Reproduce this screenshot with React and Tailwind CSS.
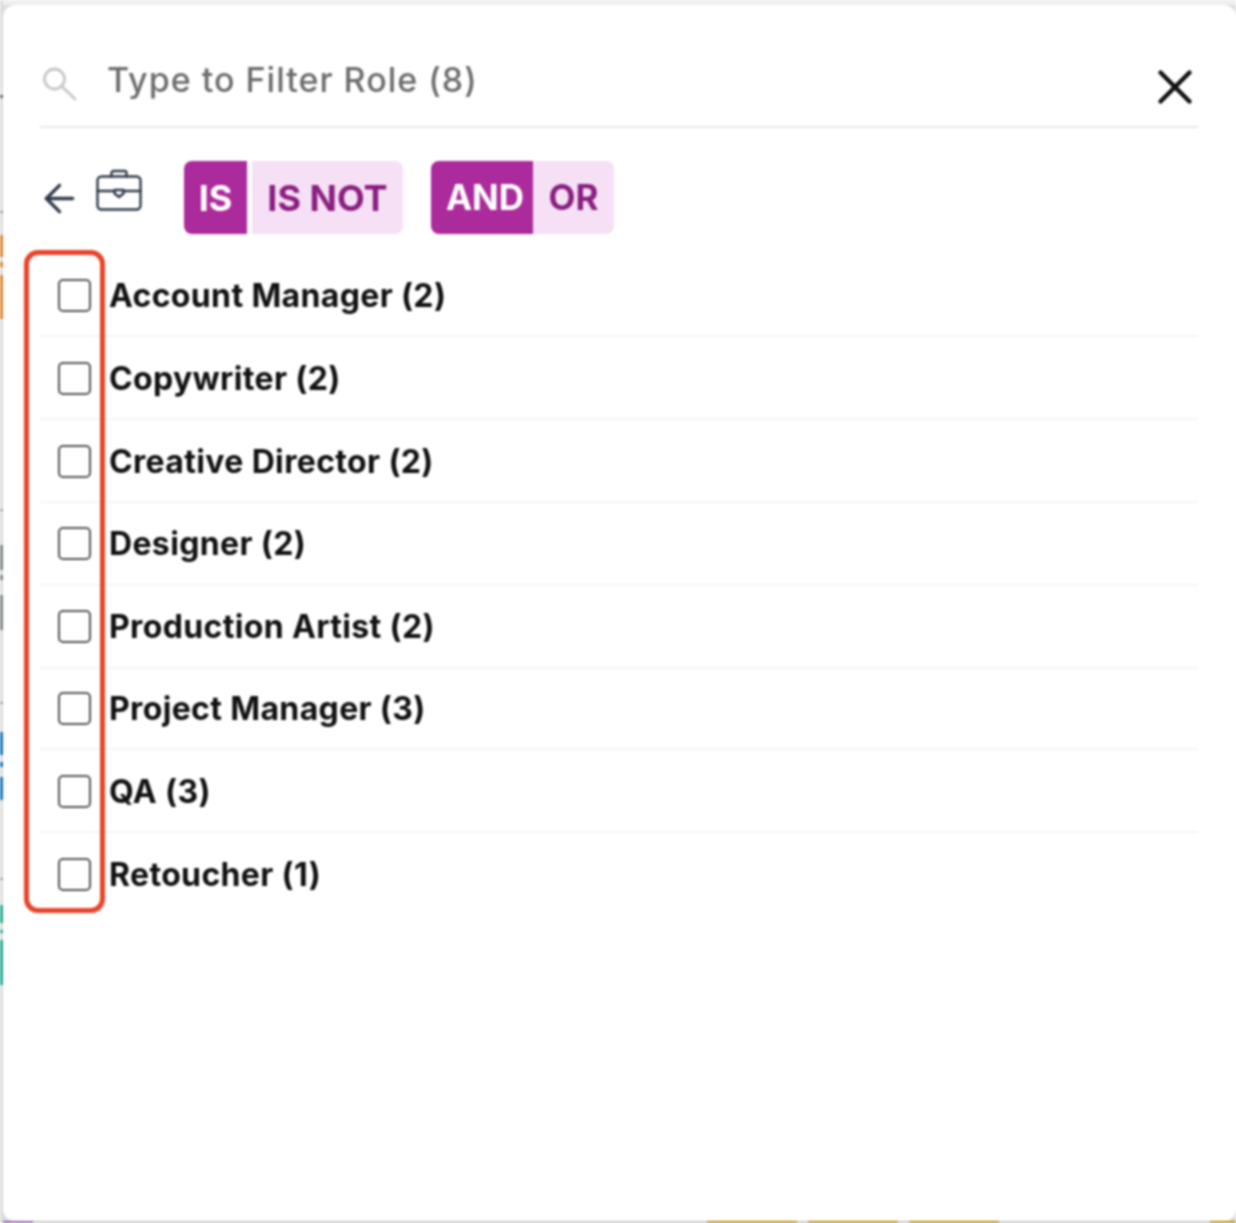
import { ArrowLeft, X } from "lucide-react";

const roles = [
  { label: "Account Manager (2)", h: "h-[83px] pt-[2px]" },
  { label: "Copywriter (2)", h: "h-[83px] pt-[2px]" },
  { label: "Creative Director (2)", h: "h-[83px] pt-[2px]" },
  { label: "Designer (2)", h: "h-[83px]" },
  { label: "Production Artist (2)", h: "h-[83px]" },
  { label: "Project Manager (3)", h: "h-[81px]" },
  { label: "QA (3)", h: "h-[83px] pt-[2px]" },
  { label: "Retoucher (1)", h: "h-[83px]" },
];

// slivers of the page behind the modal, down the left edge
const edge = [
  { h: "h-[3px] mt-[95px]", c: "bg-[#666666]" },
  { h: "h-[2px] mt-[113px]", c: "bg-[#999999]" },
  { h: "h-[22px] mt-[22px]", c: "bg-[#dc8430]" },
  { h: "h-[5px] mt-[5px]", c: "bg-[#dc8430]" },
  { h: "h-[44px] mt-[8px]", c: "bg-[#dc8430]" },
  { h: "h-[2px] mt-[190px]", c: "bg-[#999999]" },
  { h: "h-[25px] mt-[34px]", c: "bg-[#7f8585]" },
  { h: "h-[5px] mt-[5px]", c: "bg-[#7f8585]" },
  { h: "h-[35px] mt-[15px]", c: "bg-[#7f8585]" },
  { h: "h-[2px] mt-[72px]", c: "bg-[#999999]" },
  { h: "h-[23px] mt-[28px]", c: "bg-[#1673bd]" },
  { h: "h-[5px] mt-[7px]", c: "bg-[#1673bd]" },
  { h: "h-[23px] mt-[10px]", c: "bg-[#1673bd]" },
  { h: "h-[2px] mt-[78px]", c: "bg-[#999999]" },
  { h: "h-[18px] mt-[25px]", c: "bg-[#22aa8f]" },
  { h: "h-[3px] mt-[7px]", c: "bg-[#22aa8f]" },
  { h: "h-[45px] mt-[7px]", c: "bg-[#22aa8f]" },
];

function SearchGlass() {
  return (
    <svg width="34" height="34" viewBox="0 0 34 34" fill="none" stroke="#c8c8c8" strokeWidth="2.8" strokeLinecap="round">
      <circle cx="11.5" cy="12" r="10" />
      <path d="M19 19.5 32 32" />
    </svg>
  );
}

function Briefcase() {
  return (
    <svg width="46" height="42" viewBox="0 0 46 42" fill="none" stroke="#2f3b4c" strokeWidth="2.4" strokeLinejoin="round" strokeLinecap="round">
      <rect x="1.5" y="7.5" width="43" height="33" rx="4" />
      <path d="M15.5 7.5V4A2 2 0 0 1 17.5 2h11a2 2 0 0 1 2 2v3.5" />
      <path d="M1.5 22H18.5M27.5 22h17" />
      <path d="M18.5 21h9v3.5l-4.5 3.5-4.5-3.5z" />
    </svg>
  );
}

export default function App() {
  return (
    <div className="flex h-[1223px] w-[1236px] overflow-hidden bg-[#dcdcdc] font-['Inter',sans-serif] blur-[0.8px]">
      <div className="flex w-[3px] shrink-0 flex-col">
        {edge.map((s, i) => (
          <div key={i} className={`shrink-0 ${s.h} ${s.c}`} />
        ))}
      </div>

      <div className="flex min-w-0 flex-1 flex-col">
        <div className="h-[5px] shrink-0 bg-[#efefef]" />

        <div className="relative flex flex-1 flex-col rounded-xl bg-white pl-[37px] pr-[38px]">
          <div className="flex h-[123px] shrink-0 items-start border-b-2 border-[#e8e8e8]">
            <div className="mt-[62px] ml-[3px]">
              <SearchGlass />
            </div>
            <span className="mt-[52px] ml-[30px] text-[34px] font-medium leading-[46px] tracking-[1px] text-[#6c6c6c]">Type to Filter Role (8)</span>
            <X size={58} strokeWidth={1.8} className="mt-[53px] ml-auto -mr-[6px] text-[#111]" />
          </div>

          <div className="flex h-[126px] shrink-0 items-start pt-[33px]">
            <ArrowLeft size={45} strokeWidth={1.8} className="mt-[15px] -ml-[3px] shrink-0 text-[#2f3b4c]" />
            <div className="mt-[8px] ml-[14px]">
              <Briefcase />
            </div>
            <div className="ml-[42px] flex h-[73px] gap-[5px] text-[36px] font-bold">
              <div className="flex w-[63px] items-center justify-center rounded-l-lg bg-[#ac2b9c] text-white">IS</div>
              <div className="flex w-[151px] items-center justify-center rounded-r-lg bg-[#f5e0f5] text-[#8a1f80]">IS NOT</div>
            </div>
            <div className="ml-[28px] flex h-[73px] text-[35px] font-bold">
              <div className="flex w-[102px] items-center justify-center rounded-l-lg bg-[#ac2b9c] pl-[6px] text-white">AND</div>
              <div className="flex w-[81px] items-center justify-center rounded-r-lg bg-[#f5e0f5] text-[#8a1f80]">OR</div>
            </div>
          </div>

          <div className="flex flex-col">
            {roles.map((r, i) => (
              <div key={r.label} className={`flex shrink-0 items-center ${r.h} ${i < roles.length - 1 ? "border-b-2 border-[#f4f4f4]" : ""}`}>
                <span className="ml-[18px] h-[33px] w-[33px] shrink-0 rounded-[5px] border-[2.5px] border-[#555555] bg-white" />
                <span className="ml-[18px] text-[32px] font-bold leading-[44px] tracking-[0.35px] text-[#111111]">{r.label}</span>
              </div>
            ))}
          </div>

          {/* red annotation box */}
          <div className="absolute left-[21px] top-[245px] h-[663px] w-[81px] rounded-[14px] border-[5px] border-[#e8432a]" />
        </div>

        <div className="flex h-[2px] shrink-0 bg-[#c9c9c9]">
          <div className="h-full w-[30px] bg-[#9b59b6]" />
          <div className="ml-[674px] h-full w-[90px] bg-[#c08a00]" />
          <div className="ml-[11px] h-full w-[90px] bg-[#c08a00]" />
          <div className="ml-[11px] h-full w-[90px] bg-[#c08a00]" />
          <div className="ml-auto h-full w-[26px] bg-[#c08a00]" />
        </div>
      </div>
    </div>
  );
}
